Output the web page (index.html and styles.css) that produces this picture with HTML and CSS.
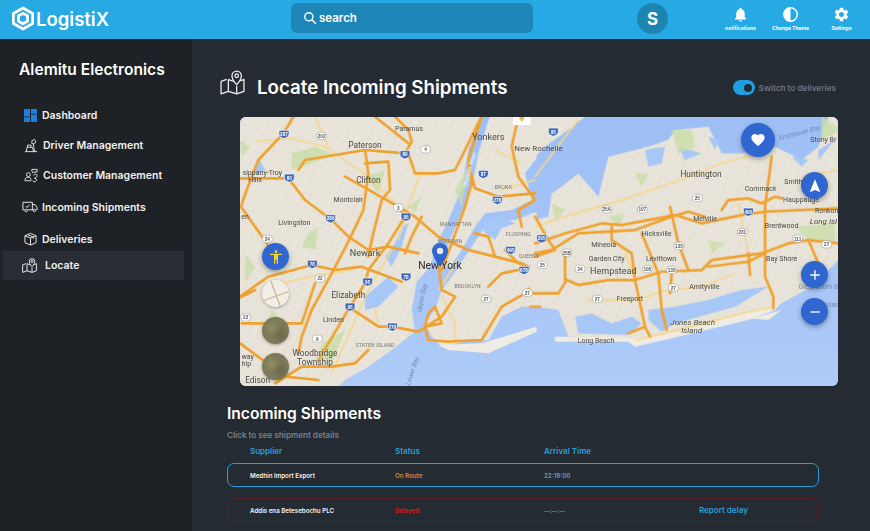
FILE: index.html
```html
<!DOCTYPE html>
<html lang="en">
<head>
    <meta charset="UTF-8">
    <title>LogistiX - Locate</title>
    <link rel="stylesheet" href="styles.css">
</head>
<body>
    <header class="topbar">
        <div class="logo">
            <svg class="logo-mark" viewBox="0 0 24 26"><path d="M12 1.500 22.500 7.500v11L12 24.500 1.500 18.500v-11z" fill="none" stroke="#fff" stroke-width="3" stroke-linejoin="round"/><path fill-rule="evenodd" d="M12 5.500 18.500 9.200v7.600L12 20.500 5.500 16.800V9.200zM12 9.500a3.500 3.500 0 1 0 0 7 3.500 3.500 0 0 0 0-7z" fill="#fff"/></svg>
            <span>LogistiX</span>
        </div>
        <div class="search">
            <svg viewBox="0 0 24 24" class="search-icon"><circle cx="10" cy="10" r="7" fill="none" stroke="#fff" stroke-width="2.400"/><path d="M15.500 15.500 22 22" stroke="#fff" stroke-width="2.400"/></svg>
            <span>search</span>
        </div>
        <div class="avatar">S</div>
        <div class="top-actions">
            <div class="top-action top-bell">
                <svg viewBox="0 0 24 24"><path fill="#fff" d="M12 22c1.100 0 2-.9 2-2h-4c0 1.100.89 2 2 2zm6-6v-5c0-3.070-1.640-5.640-4.500-6.320V4c0-.83-.67-1.500-1.500-1.500s-1.500.67-1.500 1.500v.68C7.630 5.360 6 7.920 6 11v5l-2 2v1h16v-1l-2-2z"/></svg>
                <span>notifications</span>
            </div>
            <div class="top-action top-theme">
                <svg viewBox="0 0 24 24"><circle cx="12" cy="12" r="9.500" fill="none" stroke="#fff" stroke-width="2"/><path fill="#fff" d="M12 3a9 9 0 0 0 0 18z"/></svg>
                <span>Change Theme</span>
            </div>
            <div class="top-action top-gear">
                <svg viewBox="0 0 24 24"><path fill="#fff" d="M19.140 12.940c.04-.3.06-.61.06-.94 0-.32-.02-.64-.07-.94l2.030-1.580c.18-.14.23-.41.12-.61l-1.920-3.320c-.12-.22-.37-.29-.59-.22l-2.390.96c-.5-.38-1.030-.7-1.620-.94l-.36-2.540c-.04-.24-.24-.41-.48-.41h-3.840c-.24 0-.43.17-.47.41l-.36 2.540c-.59.24-1.130.57-1.620.94l-2.390-.96c-.22-.08-.47 0-.59.22L2.740 8.870c-.12.21-.08.47.12.61l2.030 1.580c-.05.3-.09.63-.09.94s.02.64.07.94l-2.030 1.580c-.18.14-.23.41-.12.61l1.920 3.320c.12.22.37.29.59.22l2.390-.96c.5.38 1.030.7 1.620.94l.36 2.540c.05.24.24.41.48.41h3.840c.24 0 .44-.17.47-.41l.36-2.540c.59-.24 1.130-.56 1.620-.94l2.390.96c.22.08.47 0 .59-.22l1.920-3.320c.12-.22.07-.47-.12-.61l-2.010-1.580zM12 15.600c-1.980 0-3.600-1.620-3.600-3.600s1.620-3.600 3.600-3.600 3.600 1.620 3.600 3.600-1.620 3.600-3.600 3.600z"/></svg>
                <span>Settings</span>
            </div>
        </div>
    </header>

    <div class="layout">
        <aside class="sidebar">
            <h2 class="company">Alemitu Electronics</h2>
            <nav class="nav">
                <a class="nav-item nav-dash">
                    <svg viewBox="0 0 14 14"><path fill="#1e7fe0" d="M0 0h6.500v8H0zM7.500 0H14v5H7.500zM0 9h6.500v5H0zM7.500 6H14v8H7.500z"/></svg>
                    <span>Dashboard</span>
                </a>
                <a class="nav-item nav-driver">
                    <svg viewBox="0 0 16 16" class="line-icon"><path d="M1 15h14M2.500 15l1-5h6l1.500 5M4 10V7.500h4V10M9 6V2.500l3-1.500 1 1v3l-2 1zM11 6v4l1.500 5"/></svg>
                    <span>Driver Management</span>
                </a>
                <a class="nav-item nav-customer">
                    <svg viewBox="0 0 16 16" class="line-icon"><circle cx="5" cy="7" r="2.200"/><path d="M1 14c0-3 1.500-4 4-4s3 1.500 3 4zM9 3V1h6v3h-4l-1 1zM11 8a2 2 0 1 1 3 2l-2 1 2 1a2 2 0 0 1-4 2"/></svg>
                    <span>Customer Management</span>
                </a>
                <a class="nav-item nav-incoming">
                    <svg viewBox="0 0 17 12" class="line-icon"><path d="M3 9H1V1h10v8H6M11 3.500h3l2 3v2.500h-1.500M11 9h1M4 5l1.500 1.500L8 3.500"/><circle cx="4.500" cy="9.700" r="1.300"/><circle cx="13" cy="9.700" r="1.300"/></svg>
                    <span>Incoming Shipments</span>
                </a>
                <a class="nav-item nav-deliveries">
                    <svg viewBox="0 0 14 14" class="line-icon"><path d="M7 1l6 2.500v7.500L7 13.500 1 11V3.500zM1 3.500 7 6l6-2.500M7 6v7.500M4 2.300l6 2.500v2"/></svg>
                    <span>Deliveries</span>
                </a>
                <a class="nav-item nav-locate">
                    <svg viewBox="0 0 24 24" class="line-icon locate-icon"><use href="#map-pin-icon"/></svg>
                    <span>Locate</span>
                </a>
            </nav>
        </aside>

        <main class="content">
            <div class="page-head">
                <div class="page-title">
                    <svg viewBox="0 0 24 24" class="line-icon title-icon">
                        <g id="map-pin-icon">
                            <path d="M6.500 9 1 11v12l7-2.500 8 2.500 7-2.500V9l-3.500 1.500M8 9v11.500M16 15v8M13 11l-5-2"/>
                            <path d="M16 14s-4.500-4.500-4.500-8.500a4.500 4.500 0 0 1 9 0C20.500 9.500 16 14 16 14z"/>
                            <circle cx="16" cy="5.500" r="1.700"/>
                        </g>
                    </svg>
                    <h1>Locate Incoming Shipments</h1>
                </div>
                <div class="switch-wrap">
                    <span class="switch"><i></i></span>
                    <span>Switch to deliveries</span>
                </div>
            </div>

            <div class="map">
                <svg class="map-art" viewBox="0 0 1794 807" preserveAspectRatio="none">
                    <defs>
                        <pattern id="streets" width="46" height="38" patternUnits="userSpaceOnUse" patternTransform="rotate(24)">
                            <rect width="46" height="38" fill="#e9e5db"/>
                            <path d="M0 13H46M0 29H46M15 0V38M34 0V38" stroke="#dedacf" stroke-width="1.500" fill="none"/>
                        </pattern>
                        <linearGradient id="sea" x1="0" y1="0" x2="0" y2="1">
                            <stop offset="0" stop-color="#9dbff5"/>
                            <stop offset="1" stop-color="#aecbf9"/>
                        </linearGradient>
                        <filter id="soft"><feGaussianBlur stdDeviation="1.400"/></filter>
                        <path id="sh" d="M-15 -11H15V1C15 9 6 11 0 14 -6 11 -15 9 -15 1z" fill="#3f68b5" stroke="#fff" stroke-width="2"/>
                        <rect id="rt" x="-15" y="-11" width="30" height="22" rx="10" fill="#fff" stroke="#8b8b85" stroke-width="1.500"/>
                    </defs>
                    <rect width="1794" height="807" fill="url(#sea)"/>

                    <g filter="url(#soft)">
                        <!-- left half, coords as read off the left crop -->
                        <g transform="translate(-15 -21)">
                            <path fill="url(#streets)" d="M0 0H745L700 120 680 235 640 330 610 390 585 470 545 515 530 600 540 665 470 720 400 770 330 810 290 850H0z"/>
                            <!-- bronx and manhattan -->
                            <path fill="url(#streets)" d="M770 0H905V145L870 190 890 270 830 300 750 310 720 350 680 420 645 470 625 470 640 400 670 330 710 235 730 130z"/>
                            <!-- queens and brooklyn -->
                            <path fill="url(#streets)" d="M905 305 840 330 760 335 730 380 690 440 650 500 620 540 600 600 570 640 590 680 620 710 700 692 760 690 800 620 860 590 905 590z"/>
                            <path fill="#f0ece3" d="M610 705 740 700 905 650V665L760 730 640 720z"/>
                            <g fill="#a7c7f7">
                                <path d="M480 400 500 350 520 340 500 410 470 470 450 440zM390 560 460 500 490 530 430 590 390 600zM750 330 800 320 840 340 800 355 780 390 745 365zM570 520 530 590 540 640 570 570z"/>
                                <path d="M90 180 75 150 55 170 65 195z"/>
                            </g>
                            <g fill="#c9dea8" opacity=".8">
                                <path d="M170 130 240 110 300 135 200 170 170 180zM15 90 45 110 20 140zM220 370 250 350 240 420 200 410zM30 430 60 470 30 520zM110 600 150 640 120 690 90 650zM390 200 450 180 430 250zM660 240 700 170 680 290z"/>
                                <path d="M520 290 560 260 540 310zM260 700 330 660 290 760 250 750z"/>
                            </g>
                            <g fill="none" stroke="#f6d88e" stroke-width="5">
                                <path d="M60 95 170 85 270 110 400 200 490 290M240 20 280 110M90 530 230 500 350 480M620 560 660 640 660 700M420 590 430 650M470 420 390 560 330 700 290 790M560 180 520 290 490 390M800 240 900 210M670 450 610 540M780 120 860 160"/>
                            </g>
                            <g fill="none" stroke="#f0a22f" stroke-width="8" stroke-linejoin="round" stroke-linecap="round">
                                <path d="M175 20 145 70 70 150 35 240 18 290 60 350 85 385 115 430M15 205H160L210 270 290 330 340 380 400 420 460 410 550 430"/>
                                <path d="M190 180 210 150 300 135 390 120 510 130 530 95 520 60 480 20M420 20 520 100M390 120 400 190 385 300 345 385 290 490 230 600 200 680 190 730M520 130 540 190 610 190 660 180 740 20"/>
                                <path d="M390 160 460 155 465 240 440 270 410 390M330 200 490 290 540 320 610 380 700 420 780 440 860 460 900 480"/>
                                <path d="M490 290 510 320 460 400 400 480 390 520 345 590 310 650 250 750M0 570 100 500 230 465 300 480 380 470 500 515"/>
                                <path d="M340 590 430 650 470 650 550 665 620 620 660 560 620 540 610 460M570 650 580 690 640 695 740 690 800 590 870 550 900 520M570 650 580 610 600 590 620 640 570 650"/>
                                <path d="M740 20 700 150 710 220 690 290 650 400 620 480M700 160 720 235 790 260 900 250M850 20 830 110 850 200 900 270 850 300 860 350"/>
                                <path d="M780 440 760 380 720 370M810 420 850 460 890 475M760 530 800 490 900 470M120 820 200 770 290 770 360 760 400 720M150 800 250 810M240 520 200 640 20 640M0 570 60 540M15 700 110 770M410 390 400 440M560 320 530 380 510 430"/>
                            </g>
                        </g>

                        <!-- right half, coords as read off the right crop -->
                        <g transform="translate(885 -21)">
                            <path fill="url(#streets)" d="M-15 305 0 330 40 320 50 250 80 230 130 190 190 260 220 140 340 110 400 90 420 60 520 50 560 130 620 130 720 110 800 150 850 110 880 20H930V430L830 530 720 590 620 610 420 660 300 690 100 680 70 600 0 590-15 590z"/>
                            <path fill="url(#streets)" d="M-15 140 0 140 30 110 100 60 150 20H-15z"/>
                            <path fill="#f0ece3" d="M60 680 300 685 430 660 620 610 720 590 745 570 720 600 640 630 430 680 300 710 280 695 60 695zM650 625 740 600 700 630z"/>
                            <g fill="#a7c7f7">
                                <path d="M120 620 170 610 230 640 290 620 320 640 280 675 130 670zM340 600 420 590 520 570 620 540 700 530 600 590 420 640 380 665 340 630z"/>
                                <path d="M330 120 390 110 380 160 340 170zM430 110 500 130 450 150zM520 80 550 90 540 120zM770 140 820 150 800 170zM850 120 900 90 850 150z"/>
                            </g>
                            <g fill="#c9dea8" opacity=".8">
                                <path d="M410 60 470 60 480 110 430 130zM300 190 340 190 320 230zM50 280 90 300 60 330zM520 390 570 400 530 430zM780 350 900 340V400L820 390zM860 20 920 60 860 90zM220 320 270 310 250 350z"/>
                            </g>
                            <g fill="none" stroke="#f6d88e" stroke-width="5">
                                <path d="M0 350 120 310 260 270 420 215 560 160 700 120M150 570 300 570 400 540 500 530 600 490M610 280 640 430M270 430 300 510M300 690 430 660 620 610 720 590M0 200 60 120 130 30M800 200 910 180"/>
                            </g>
                            <g fill="none" stroke="#f0a22f" stroke-width="8" stroke-linejoin="round" stroke-linecap="round">
                                <path d="M0 400 90 370 200 340 260 345 420 315 500 340 620 315 690 305 910 295M0 430 50 420 130 370 300 360 410 320 460 305 510 320"/>
                                <path d="M-15 550 70 550 95 510 130 525 220 510 300 510 380 485 500 480 530 450 680 430 760 400 820 390 910 400M90 430V510"/>
                                <path d="M230 350V390L290 430 300 510 330 650 345 680M320 370 370 490 380 600 395 660M405 290 430 400 460 480M410 490 405 550"/>
                                <path d="M710 140 690 290V500L715 560V595M560 300 580 270 640 265 680 280 720 260 740 265M820 390 850 460M280 670 330 650M640 430 645 495M520 470 640 455 690 430"/>
                                <path d="M0 320 40 390 60 420 0 440M-15 590H15"/>
                            </g>
                        </g>
                    </g>

                    <g class="shields" transform="translate(-15 -21)">
                        <use href="#sh" x="147" y="72"/><text x="147" y="78">287</text>
                        <use href="#sh" x="510" y="133"/><text x="510" y="139">80</text>
                        <use href="#sh" x="163" y="203"/><text x="163" y="209">80</text>
                        <use href="#sh" x="745" y="192"/><text x="745" y="198">87</text>
                        <use href="#sh" x="787" y="270"/><text x="787" y="276">278</text>
                        <use href="#sh" x="513" y="320"/><text x="513" y="326">95</text>
                        <use href="#sh" x="287" y="325"/><text x="287" y="331">280</text>
                        <use href="#sh" x="827" y="420"/><text x="827" y="426">495</text>
                        <use href="#sh" x="867" y="480"/><text x="867" y="486">678</text>
                        <use href="#sh" x="232" y="462"/><text x="232" y="468">78</text>
                        <use href="#sh" x="398" y="515"/><text x="398" y="521">95</text>
                        <use href="#sh" x="513" y="500"/><text x="513" y="506">78</text>
                        <use href="#sh" x="345" y="590"/><text x="345" y="596">95</text>
                        <use href="#sh" x="472" y="650"/><text x="472" y="656">278</text>
                    </g>
                    <g class="routes" transform="translate(-15 -21)">
                        <use href="#rt" x="260" y="78"/><text x="260" y="84">202</text>
                        <use href="#rt" x="572" y="118"/><text x="572" y="124">4</text>
                        <use href="#rt" x="490" y="293"/><text x="490" y="299">3</text>
                        <use href="#rt" x="97" y="387"/><text x="97" y="393">24</text>
                        <use href="#rt" x="255" y="505"/><text x="255" y="511">22</text>
                        <use href="#rt" x="877" y="548"/><text x="877" y="554">27</text>
                        <use href="#rt" x="753" y="567"/><text x="753" y="573">27</text>
                        <use href="#rt" x="32" y="622"/><text x="32" y="628">22</text>
                        <use href="#rt" x="247" y="686"/><text x="247" y="692">9</text>
                    </g>
                    <g class="shields" transform="translate(885 -21)">
                        <use href="#sh" x="55" y="65"/><text x="55" y="71">95</text>
                        <use href="#sh" x="640" y="305"/><text x="640" y="311">495</text>
                        <use href="#sh" x="20" y="385"/><text x="20" y="391">295</text>
                    </g>
                    <g class="routes" transform="translate(885 -21)">
                        <use href="#rt" x="487" y="264"/><text x="487" y="270">25</text>
                        <use href="#rt" x="215" y="298"/><text x="215" y="304">25A</text>
                        <use href="#rt" x="322" y="298"/><text x="322" y="304">107</text>
                        <use href="#rt" x="622" y="366"/><text x="622" y="372">231</text>
                        <use href="#rt" x="788" y="386"/><text x="788" y="392">111</text>
                        <use href="#rt" x="875" y="403"/><text x="875" y="409">27</text>
                        <use href="#rt" x="432" y="408"/><text x="432" y="414">135</text>
                        <use href="#rt" x="95" y="428"/><text x="95" y="434">25B</text>
                        <use href="#rt" x="22" y="465"/><text x="22" y="471">25</text>
                        <use href="#rt" x="135" y="477"/><text x="135" y="483">24</text>
                        <use href="#rt" x="337" y="477"/><text x="337" y="483">106</text>
                        <use href="#rt" x="410" y="480"/><text x="410" y="486">135</text>
                        <use href="#rt" x="415" y="533"/><text x="415" y="539">27</text>
                        <use href="#rt" x="187" y="567"/><text x="187" y="573">27</text>
                    </g>

                    <!-- small white tab with the yellow marker at the top edge -->
                    <g transform="translate(-15 -21)">
                        <rect x="834" y="21" width="52" height="24" fill="#fff"/>
                        <path d="M860 21V34M853 25H867" stroke="#e5b52e" stroke-width="6"/>
                    </g>

                    <g class="places" transform="translate(-15 -21)">
                        <text x="522" y="63" class="sm">Paramus</text>
                        <text x="390" y="114">Paterson</text>
                        <text x="760" y="90" class="lg">Yonkers</text>
                        <text x="838" y="124" class="st">New Rochelle</text>
                        <text x="82" y="195" class="sm">sippany-Troy</text>
                        <text x="60" y="216" class="sm">Hills</text>
                        <text x="400" y="218">Clifton</text>
                        <text x="340" y="275" class="sm">Montclair</text>
                        <text x="178" y="346" class="sm">Livingston</text>
                        <text x="390" y="437" class="lg">Newark</text>
                        <text x="615" y="478" class="xl">New York</text>
                        <text x="340" y="564">Elizabeth</text>
                        <text x="295" y="637" class="sm">Linden</text>
                        <text x="240" y="738">Woodbridge</text>
                        <text x="240" y="764">Township</text>
                        <text x="68" y="820">Edison</text>
                        <text x="38" y="748" class="sm">way</text>
                        <text x="34" y="768" class="sm">hip</text>
                        <text x="30" y="326" class="sm">en</text>
                        <text x="662" y="349" class="dist">MANHATTAN</text>
                        <text x="645" y="399" class="dist">MIDTOWN</text>
                        <text x="698" y="534" class="dist">BROOKLYN</text>
                        <text x="805" y="238" class="dist">BRONX</text>
                        <text x="882" y="445" class="dist">QUEENS</text>
                        <text x="850" y="377" class="dist">FLUSHING</text>
                        <text x="420" y="710" class="dist">STATEN ISLAND</text>
                        <text transform="translate(567 565) rotate(-78)" class="water">Upper Bay</text>
                        <text transform="translate(538 785) rotate(-72)" class="water">Lower Bay</text>
                        <text transform="translate(710 180) rotate(-74)" class="river">Hudson River</text>
                    </g>
                    <g class="places" transform="translate(885 -21)">
                        <text x="498" y="200">Huntington</text>
                        <text x="677" y="244" class="sm">Commack</text>
                        <text x="775" y="221" class="sm">Smith</text>
                        <text x="798" y="276" class="sm">Hauppauge</text>
                        <text x="510" y="332" class="sm">Melville</text>
                        <text x="740" y="353" class="sm">Brentwood</text>
                        <text x="865" y="341" class="it">Long Isl</text>
                        <text x="875" y="308" class="sm">Ronkon</text>
                        <text x="365" y="378" class="sm">Hicksville</text>
                        <text x="206" y="411" class="sm">Mineola</text>
                        <text x="215" y="452" class="sm">Garden City</text>
                        <text x="378" y="454" class="sm">Levittown</text>
                        <text x="235" y="491" class="lg">Hempstead</text>
                        <text x="740" y="453" class="sm">Bay Shore</text>
                        <text x="508" y="536" class="sm">Amityville</text>
                        <text x="285" y="574" class="sm">Freeport</text>
                        <text x="183" y="698" class="sm">Long Beach</text>
                        <text x="473" y="646" class="it">Jones Beach</text>
                        <text x="470" y="670" class="it">Island</text>
                        <text x="850" y="537" class="water">Great South B</text>
                        <text x="865" y="96" class="sm">Stony Br</text>
                        <text transform="translate(795 75) rotate(-15)" class="water">Smithtown Bay</text>
                        <text x="890" y="592" class="water">Islan</text>
                    </g>
                </svg>

                <button class="fab fab-heart">
                    <svg viewBox="0 0 24 24"><path fill="#fff" d="M12 21.350l-1.450-1.320C5.400 15.360 2 12.280 2 8.500 2 5.420 4.420 3 7.500 3c1.740 0 3.410.81 4.500 2.090C13.090 3.810 14.760 3 16.500 3 19.580 3 22 5.420 22 8.500c0 3.780-3.400 6.860-8.550 11.540L12 21.350z"/></svg>
                </button>
                <button class="fab fab-nav">
                    <svg viewBox="0 0 24 24"><path fill="#fff" d="M12 2 4.500 20.290l.71.71L12 18l6.790 3 .71-.71z"/></svg>
                </button>
                <button class="fab fab-plus">
                    <svg viewBox="0 0 24 24"><path fill="none" stroke="#fff" stroke-width="2" d="M12 5v14M5 12h14"/></svg>
                </button>
                <button class="fab fab-minus">
                    <svg viewBox="0 0 24 24"><path fill="none" stroke="#fff" stroke-width="2" d="M5 12h14"/></svg>
                </button>
                <button class="fab fab-person">
                    <svg viewBox="0 0 24 24"><path fill="#f5d327" d="M12 2c1.100 0 2 .9 2 2s-.9 2-2 2-2-.9-2-2 .9-2 2-2zm9 7h-6v13h-2v-6h-2v6H9V9H3V7h18v2z"/></svg>
                </button>
                <span class="thumb thumb-road"></span>
                <span class="thumb thumb-sat thumb-sat1"></span>
                <span class="thumb thumb-sat thumb-sat2"></span>
                <svg class="pin" viewBox="0 0 16 24"><path fill="#2f66cf" d="M8 0C3.500 0 0 3.500 0 8c0 5.500 8 16 8 16s8-10.500 8-16c0-4.500-3.500-8-8-8z"/><circle cx="8" cy="8" r="3.200" fill="#e8e8e8"/></svg>
            </div>

            <section class="shipments">
                <h2>Incoming Shipments</h2>
                <p class="hint">Click to see shipment details</p>
                <div class="ship-row ship-head">
                    <span>Supplier</span>
                    <span>Status</span>
                    <span>Arrival Time</span>
                </div>
                <div class="ship-row ship-item ship-active">
                    <span class="supplier">Medhin Import Export</span>
                    <span class="on-route">On Route</span>
                    <span class="time">22:18:00</span>
                </div>
                <div class="ship-row ship-item ship-late">
                    <span class="supplier">Addis ena Betesebochu PLC</span>
                    <span class="delayed">Delayed</span>
                    <span class="time">--:--:--</span>
                    <a class="report">Report delay</a>
                </div>
            </section>
        </main>
    </div>
</body>
</html>
```

FILE: styles.css
```css
* {
    box-sizing: border-box;
}

html, body {
    height: 100%;
}

body {
    margin: 0;
    font-family: Inter, "Liberation Sans", sans-serif;
    background-color: #252b33;
    color: #fff;
    overflow: hidden;
}

/* top bar */
.topbar {
    height: 39px;
    background-color: #27a9e3;
    display: flex;
    align-items: flex-start;
}

.logo {
    width: 291px;
    flex: none;
    display: flex;
    align-items: center;
    padding: 6px 0 0 12px;
    font-size: 18.500px;
    font-weight: 600;
}

.logo-mark {
    width: 22px;
    height: 25px;
    margin-right: 2px;
}

.search {
    width: 242px;
    height: 30px;
    flex: none;
    margin-top: 3px;
    padding-left: 12px;
    display: flex;
    align-items: center;
    gap: 2px;
    background-color: #1e86b6;
    border-radius: 6px;
    font-size: 11.500px;
    font-weight: 600;
}

.search-icon {
    width: 14px;
    height: 14px;
}

.avatar {
    width: 31px;
    height: 31px;
    flex: none;
    margin: 3px 0 0 104px;
    background-color: #1c85b0;
    border-radius: 50%;
    display: flex;
    align-items: center;
    justify-content: center;
    font-size: 17px;
    font-weight: 700;
}

.top-actions {
    flex: 1;
    display: flex;
    padding-left: 47.500px;
}

.top-action {
    width: 50px;
    padding-top: 6px;
    display: flex;
    flex-direction: column;
    align-items: center;
    font-size: 5px;
    font-weight: 700;
    white-space: nowrap;
}

.top-action svg {
    width: 17px;
    height: 17px;
    margin-bottom: 2px;
}

.top-bell svg {
    width: 19px;
    height: 17px;
}

.top-gear {
    margin-left: 1px;
}

/* sidebar */
.layout {
    display: flex;
    height: calc(100% - 39px);
}

.sidebar {
    width: 192px;
    flex: none;
    background-color: #1e2125;
    padding-top: 22px;
}

.company {
    margin: 0 0 0 19px;
    font-size: 15.600px;
    line-height: 18px;
    font-weight: 600;
}

.nav {
    display: flex;
    flex-direction: column;
    margin-top: 21px;
}

.nav-item {
    display: flex;
    align-items: center;
    height: 31px;
    padding-left: 24px;
    font-size: 10.500px;
    font-weight: 600;
    color: #f0f0f0;
}

.nav-item svg {
    width: 14px;
    height: 15px;
    margin-right: 5px;
    flex: none;
}

.nav-dash, .nav-driver {
    height: 30px;
}

.nav-dash svg {
    width: 13px;
    height: 13px;
}

.nav-deliveries {
    height: 28px;
    padding-top: 4px;
}

.nav-deliveries svg {
    width: 13px;
    height: 14px;
}

.nav-incoming {
    height: 32px;
    padding-left: 22px;
}

.nav-incoming svg {
    width: 16px;
    height: 12px;
    margin-right: 4px;
}

.nav-locate {
    height: 29px;
    width: 181px;
    margin: 0 0 0 3px;
    padding-left: 19px;
    background-color: #282d36;
}

.nav-locate svg {
    width: 15px;
    height: 15px;
    margin-right: 8px;
}

.line-icon {
    fill: none;
    stroke: #f0f0f0;
    stroke-width: 1;
    stroke-linejoin: round;
}

.locate-icon {
    stroke-width: 1.500;
}

/* main area */
.content {
    flex: 1;
    min-width: 0;
}

.page-head {
    height: 78px;
    display: flex;
    justify-content: space-between;
    align-items: flex-start;
    padding: 31px 34px 0 28px;
}

.page-title {
    display: flex;
    align-items: flex-start;
}

.title-icon {
    width: 25px;
    height: 25px;
    margin-right: 12px;
    stroke-width: 1.200;
}

.page-title h1 {
    margin: 6px 0 0;
    font-size: 18.700px;
    line-height: 24px;
    font-weight: 600;
}

.switch-wrap {
    display: flex;
    align-items: center;
    gap: 4px;
    margin-top: 10px;
    font-size: 8.200px;
    font-weight: 600;
    color: #6d7686;
}

.switch {
    width: 22px;
    height: 15px;
    padding: 3px 3px 0 0;
    display: flex;
    justify-content: flex-end;
    background-color: #1f9fe0;
    border-radius: 8px;
}

.switch i {
    width: 8px;
    height: 8px;
    margin-top: 0.500px;
    border-radius: 50%;
    background-color: #252b33;
}

/* map */
.map {
    position: relative;
    width: 598px;
    height: 269px;
    margin-left: 48px;
    border-radius: 6px;
    overflow: hidden;
    background-color: #a4c4f5;
}

.map-art {
    display: block;
    width: 100%;
    height: 100%;
}

.shields text, .routes text {
    font-family: "Liberation Sans", sans-serif;
    font-size: 14px;
    font-weight: 700;
    text-anchor: middle;
}

.shields text {
    fill: #fff;
}

.routes text {
    fill: #555;
}

.places text {
    font-family: Roboto, "Liberation Sans", sans-serif;
    font-size: 25px;
    fill: #4b4b46;
    text-anchor: middle;
}

.places .sm {
    font-size: 21px;
}

.places .lg {
    font-size: 27px;
}

.places .xl {
    font-size: 31px;
    fill: #2b2b2b;
}

.places .st {
    font-size: 24px;
    text-anchor: start;
}

.places .dist {
    font-size: 15px;
    letter-spacing: 0.500px;
    fill: #77756d;
}

.places .water {
    font-size: 20px;
    font-style: italic;
    fill: #6f8ab5;
}

.places .river {
    font-size: 19px;
    font-style: italic;
    fill: #f0f4fb;
}

.places .it {
    font-size: 24px;
    font-style: italic;
}

.fab {
    position: absolute;
    padding: 0;
    border: none;
    border-radius: 50%;
    background-color: #2f66cf;
    box-shadow: 0 2px 5px rgba(0, 0, 0, 0.35);
    display: flex;
    align-items: center;
    justify-content: center;
}

.fab svg {
    width: 16px;
    height: 16px;
}

.fab-heart {
    width: 34px;
    height: 34px;
    left: 501px;
    top: 6px;
}

.fab-nav {
    width: 27px;
    height: 27px;
    left: 561px;
    top: 55px;
}

.fab-plus {
    width: 27px;
    height: 27px;
    left: 561px;
    top: 144px;
}

.fab-minus {
    width: 27px;
    height: 27px;
    left: 561px;
    top: 181px;
}

.fab-person {
    width: 27px;
    height: 27px;
    left: 22px;
    top: 126px;
}

.thumb {
    position: absolute;
    left: 22px;
    width: 27px;
    height: 27px;
    border-radius: 50%;
    box-shadow: 0 1px 3px rgba(0, 0, 0, 0.3);
}

.thumb-road {
    top: 163px;
    background:
        linear-gradient(70deg, transparent 47%, #d8c49c 48%, #d8c49c 52%, transparent 53%),
        linear-gradient(160deg, transparent 55%, #d8c49c 56%, #d8c49c 59%, transparent 60%),
        #f1eee7;
}

.thumb-sat {
    background:
        radial-gradient(circle at 35% 40%, #8f8a62 0, transparent 35%),
        radial-gradient(circle at 70% 65%, #6d6a4c 0, transparent 40%),
        #7c7a5a;
}

.thumb-sat1 {
    top: 200px;
}

.thumb-sat2 {
    top: 236px;
}

.pin {
    position: absolute;
    left: 192px;
    top: 126px;
    width: 16px;
    height: 24px;
}

/* shipments list */
.shipments {
    padding: 18px 51px 0 35px;
}

.shipments h2 {
    margin: 0;
    font-size: 15.600px;
    line-height: 20px;
    font-weight: 600;
}

.hint {
    margin: 6px 0 0;
    font-size: 8.100px;
    line-height: 10px;
    font-weight: 600;
    color: #76808e;
}

.ship-row {
    display: grid;
    grid-template-columns: 145px 149px 155px 1fr;
    align-items: center;
    padding-left: 23px;
}

.ship-head {
    height: 11px;
    margin-top: 5px;
    font-size: 8px;
    font-weight: 600;
    color: #27a0d8;
}

.ship-item {
    height: 24px;
    font-size: 6.200px;
    font-weight: 600;
    border-radius: 7px;
    padding-left: 22px;
}

.ship-active {
    margin-top: 7px;
    border: 1.500px solid #27a0d8;
}

.ship-late {
    margin-top: 11px;
    border: 1px solid #5a1f24;
}

.supplier {
    color: #f2f2f2;
}

.on-route {
    color: #d98a32;
}

.delayed {
    color: #d81818;
}

.time {
    color: #8a93a0;
}

.report {
    font-size: 8px;
    color: #27a0d8;
}
```
